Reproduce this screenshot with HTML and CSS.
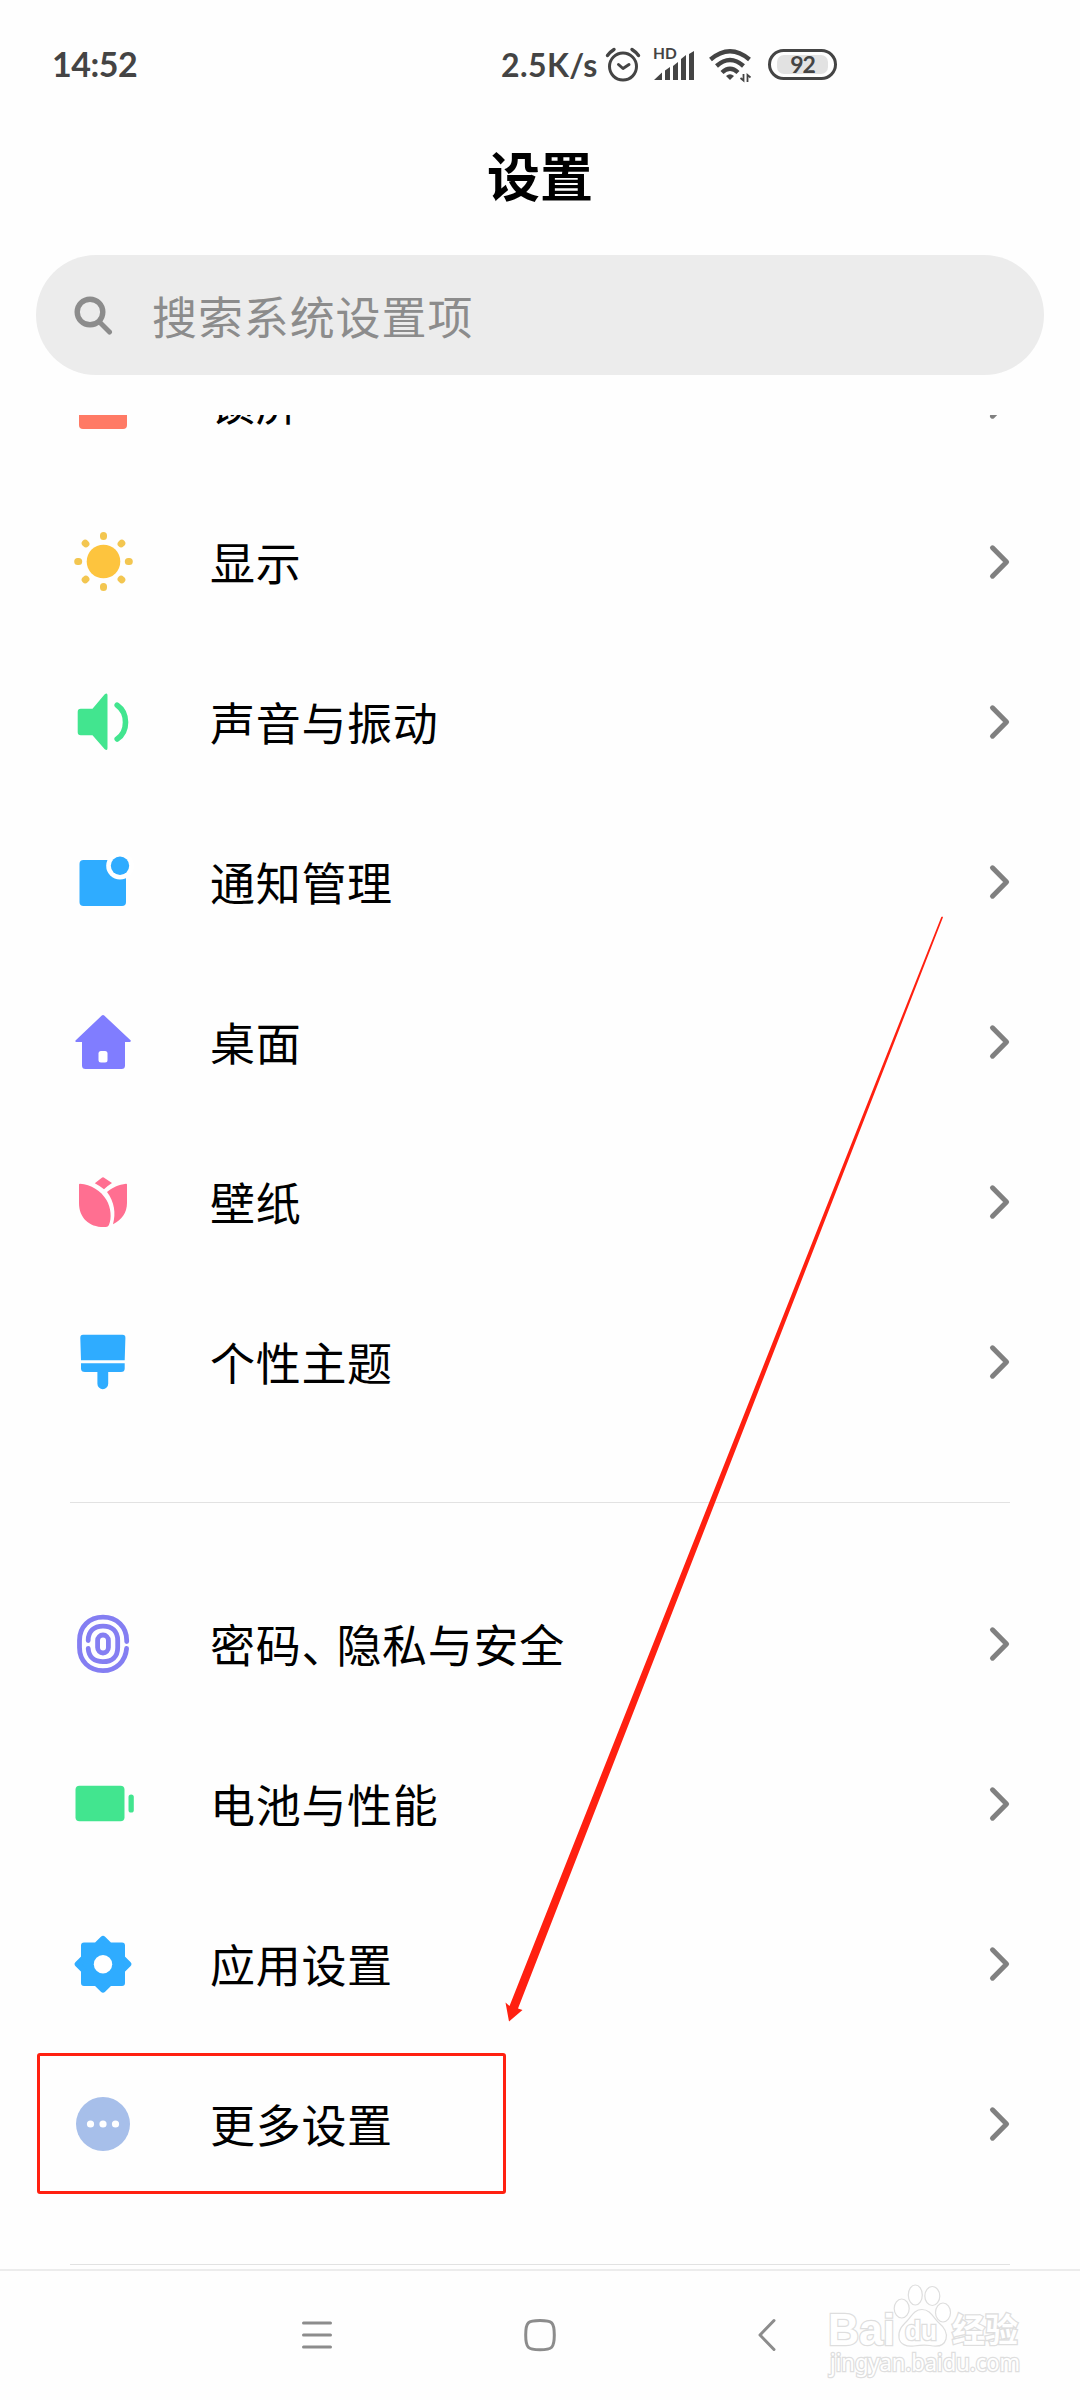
FILE: index.html
```html
<!DOCTYPE html>
<html lang="zh-CN">
<head>
<meta charset="utf-8">
<title>设置</title>
<link rel="stylesheet" href="styles.css">
</head>
<body>
<svg class="defs" width="0" height="0" aria-hidden="true">
  <symbol id="chevron" viewBox="0 0 24 36"><path d="M4.5 3.8 18.6 18 4.5 32.2" fill="none" stroke="#808080" stroke-width="5" stroke-linecap="round" stroke-linejoin="round"/></symbol>
</svg>
<div class="phone">
  <header class="status">
    <span class="clock">14:52</span>
    <div class="indicators">
      <span class="speed">2.5K/s</span>
      <svg class="alarm" width="36" height="36" viewBox="0 0 36 36" fill="none" stroke="#444" stroke-linecap="round">
        <circle cx="18" cy="19.6" r="13.5" stroke-width="3"/>
        <path d="M13.5 17.5 18 21.5 24 17.5" stroke-width="3" stroke-linejoin="round"/>
        <path d="M2.5 8.5Q5 5 9 2.5M33.5 8.5Q31 5 27 2.5" stroke-width="3.4"/>
      </svg>
      <div class="mobile">
        <span class="hd">HD</span>
        <svg width="42" height="32" viewBox="0 0 42 32" fill="#444">
          <path d="M1 31 9 23.5V31ZM12 21.5 17 18V31H12ZM20 17 25 13V31H20ZM28 10 33 6V31H28ZM36 5 41 2V31H36Z"/>
        </svg>
      </div>
      <svg class="wifi" width="44" height="36" viewBox="0 0 44 36">
        <g fill="none" stroke="#444" stroke-width="4.4">
          <path d="M1.5 12.5Q21 -4 40.5 12.5"/>
          <path d="M7.5 19Q21 7 34.5 19"/>
          <path d="M13 25.5Q21 18 29 25.5"/>
        </g>
        <path d="M17 29Q21 25.5 25 29L21 33Z" fill="#444"/>
        <path d="M34.5 27V33.5L31.5 31M38.5 35V28L41.5 30.5" fill="none" stroke="#444" stroke-width="1.8"/>
      </svg>
      <div class="battery"><span class="level">92</span></div>
    </div>
  </header>

  <h1 class="title">设置</h1>

  <div class="search">
    <svg width="40" height="40" viewBox="0 0 40 40" fill="none" stroke="#8c8c8c" stroke-linecap="round">
      <circle cx="16" cy="17" r="12.8" stroke-width="5.4"/>
      <path d="M26 27.5 35.5 37" stroke-width="5"/>
    </svg>
    <span class="hint">搜索系统设置项</span>
  </div>

  <main class="list">
    <div class="group">
      <div class="row">
        <svg class="icon" viewBox="0 0 64 64"><rect x="8" y="20" width="48" height="39" rx="4" fill="#ff7a65"/><path d="M18 22V16a14 12 0 0 1 28 0V22" fill="none" stroke="#ff7a65" stroke-width="5"/></svg>
        <span class="label">锁屏</span><svg class="chev"><use href="#chevron"/></svg>
      </div>
      <div class="row">
        <svg class="icon" viewBox="0 0 64 64">
          <circle cx="32.5" cy="31.5" r="16.8" fill="#fdc43e"/>
          <g stroke="#f3c650" stroke-width="7" stroke-linecap="round"><path d="M32.5 5.5V6.5M32.5 56.5V57.5M6.7 31.5H7.7M57.3 31.5H58.3M14.2 13.2 14.9 13.9M50.8 13.2 50.1 13.9M14.2 49.8 14.9 49.1M50.8 49.8 50.1 49.1"/></g>
        </svg>
        <span class="label">显示</span><svg class="chev"><use href="#chevron"/></svg>
      </div>
      <div class="row">
        <svg class="icon" viewBox="0 0 64 64">
          <path d="M9.7 18.7H21.5L33.5 4.5Q36.5 2.2 36.5 5.5V58Q36.5 61.3 33.5 59L21.5 45.3H9.7Q6.7 45.3 6.7 42.3V21.7Q6.7 18.7 9.7 18.7Z" fill="#42e58f"/>
          <path d="M46.2 15.2C57.3 23 57.3 41.5 46.2 49" fill="none" stroke="#42e58f" stroke-width="5.6" stroke-linecap="round"/>
        </svg>
        <span class="label">声音与振动</span><svg class="chev"><use href="#chevron"/></svg>
      </div>
      <div class="row">
        <svg class="icon" viewBox="0 0 64 64">
          <rect x="8.5" y="10" width="46.5" height="46" rx="4" fill="#2facff"/>
          <circle cx="49" cy="15.7" r="13.8" fill="#fff"/><circle cx="49" cy="15.7" r="9.2" fill="#2facff"/>
        </svg>
        <span class="label">通知管理</span><svg class="chev"><use href="#chevron"/></svg>
      </div>
      <div class="row">
        <svg class="icon" viewBox="0 0 64 64">
          <path d="M30.5 5.8Q32 4.4 33.5 5.8L59.8 30.5Q60 32 58.5 32H54V55.5Q54 59 50.5 59H14.5Q11 59 11 55.5V32H5.5Q3.8 32 4.5 30.5Z" fill="#807dff"/>
          <rect x="27.5" y="41" width="9" height="11.5" rx="2.5" fill="#fff"/>
        </svg>
        <span class="label">桌面</span><svg class="chev"><use href="#chevron"/></svg>
      </div>
      <div class="row">
        <svg class="icon" viewBox="0 0 64 64" fill="#ff6f91">
          <path d="M8 14.5Q8 13.7 9 13.7C20 14.5 30 20.5 35.5 30C40 38 41 48 37.8 55.3Q37 57 35 57C19 58 8 48.5 8 33Z"/>
          <path d="M56 14.5Q56 13.6 55 13.7C48 14.5 41 17.5 36 22C43.5 32 45 43 42 54.3C50.5 50 56 43 56 33Z"/>
          <path d="M30.5 8Q32 6.5 33.5 8L41 13Q37 15.5 33 19.3Q29 16 23.8 13.3Z"/>
        </svg>
        <span class="label">壁纸</span><svg class="chev"><use href="#chevron"/></svg>
      </div>
      <div class="row">
        <svg class="icon" viewBox="0 0 64 64" fill="#2facff">
          <path d="M12 4.7H51.5Q54.5 4.7 54.4 8L53.7 30.3H10L9.3 8Q9.2 4.7 12 4.7Z"/>
          <path d="M10 33.3H53.7V38.5Q53.7 42 50 42H37.2V53.8A5.4 5.4 0 0 1 26.4 53.8V42H14Q10 42 10 38.5Z"/>
        </svg>
        <span class="label">个性主题</span><svg class="chev"><use href="#chevron"/></svg>
      </div>
    </div>
    <div class="group">
      <div class="row">
        <svg class="icon" viewBox="0 0 64 64" fill="none" stroke="#847ef2" stroke-width="4.8" stroke-linecap="round">
          <path d="M55.7 29.5V28.5C55.7 15 46 5.2 32 5.2S8.5 15 8.5 28.5V35.5C8.5 49 18 58.6 32 58.6C45 58.6 54.5 49.5 55.6 36.5"/>
          <path d="M17.2 28.5C17.2 19 23 14.2 32 14.2S46.7 19 46.7 28.5V35.5C46.7 45 41 49.7 32 49.7C23.5 49.7 17.8 45.5 17.2 36.5"/>
          <rect x="26.6" y="23" width="10.8" height="18" rx="5.4"/>
        </svg>
        <span class="label">密码<span class="comma">、</span>隐私与安全</span><svg class="chev"><use href="#chevron"/></svg>
      </div>
      <div class="row">
        <svg class="icon" viewBox="0 0 64 64" fill="#42e58f">
          <rect x="4.5" y="13.7" width="49" height="35.6" rx="4"/><rect x="57.5" y="22.5" width="5.3" height="18" rx="2.6"/>
        </svg>
        <span class="label">电池与性能</span><svg class="chev"><use href="#chevron"/></svg>
      </div>
      <div class="row">
        <svg class="icon" viewBox="0 0 64 64">
          <g fill="#2facff" stroke="#2facff" stroke-width="6" stroke-linejoin="round"><path d="M32 7 38.6 13.4H51V25.9L57.3 32.2 51 38.5V51H38.6L32 57.5 25.4 51H13V38.5L6.7 32.2 13 25.9V13.4H25.4Z"/></g>
          <circle cx="32" cy="32.2" r="9.2" fill="#fff"/>
        </svg>
        <span class="label">应用设置</span><svg class="chev"><use href="#chevron"/></svg>
      </div>
      <div class="row">
        <svg class="icon" viewBox="0 0 64 64"><circle cx="32" cy="32" r="27" fill="#a7bfea"/><g fill="#fff"><circle cx="19.5" cy="32" r="3.6"/><circle cx="32" cy="32" r="3.6"/><circle cx="44.5" cy="32" r="3.6"/></g></svg>
        <span class="label">更多设置</span><svg class="chev"><use href="#chevron"/></svg>
      </div>
    </div>
  </main>

  <nav class="navbar">
    <svg width="36" height="36" viewBox="0 0 36 36" fill="none" stroke="#8c8c8c" stroke-width="3" stroke-linecap="round"><path d="M4.5 6H31.5M4.5 18H31.5M4.5 30H31.5"/></svg>
    <svg width="36" height="36" viewBox="0 0 36 36" fill="none" stroke="#8c8c8c" stroke-width="3"><path d="M17 3.5C29 3.5 31.3 5 31.3 18S29 32.7 17 32.7 2.7 31 2.7 18 5 3.5 17 3.5Z"/></svg>
    <svg width="36" height="36" viewBox="0 0 36 36" fill="none" stroke="#8c8c8c" stroke-width="3" stroke-linecap="round" stroke-linejoin="round"><path d="M27 3.5 13 18 27 32.5"/></svg>
  </nav>

  <div class="highlight"></div>
  <svg class="arrow" width="450" height="1120" viewBox="500 910 450 1120"><path d="M942.2 916.5 943 917.2 518 2008.5 522.5 2010 509 2021.5 505.5 2002.5 509.5 2006 941.3 917Z" fill="#ff2010"/></svg>

  <svg class="watermark" width="220" height="110" viewBox="820 2275 220 110">
    <g fill="#fff" stroke="#dedede" stroke-width="1.2">
      <ellipse cx="901.7" cy="2308.5" rx="7.5" ry="9.5"/><ellipse cx="915.3" cy="2295" rx="7" ry="10"/>
      <ellipse cx="932.3" cy="2296" rx="7.5" ry="9.5"/><ellipse cx="943" cy="2312.5" rx="7.5" ry="9.5"/>
      <path d="M922 2309.5C930 2309.5 933 2317 938 2322C944 2327 948 2332 946 2339C944 2346 937 2347 930 2345.5C924 2344.5 920 2345 914 2346C906 2347 900 2344 899 2338C898 2330 902 2326 907 2321C912 2316 914 2309.5 922 2309.5Z"/>
      <g paint-order="stroke" stroke-width="2.6">
        <text class="wm-logo" x="828" y="2345" font-size="45" textLength="67" lengthAdjust="spacingAndGlyphs">Bai</text>
        <text class="wm-logo" x="905" y="2340" font-size="27" textLength="32" lengthAdjust="spacingAndGlyphs">du</text>
        <text class="wm-cn" x="952" y="2342" font-size="33">经验</text>
        <text class="wm-url" x="830" y="2371" font-size="23" textLength="190" lengthAdjust="spacingAndGlyphs">jingyan.baidu.com</text>
      </g>
    </g>
  </svg>
</div>
</body>
</html>
```
FILE: styles.css
```css
* { box-sizing: border-box; }

body {
  margin: 0;
  background: #fefefe;
  color: #000;
  font-family: "Noto Sans CJK SC", sans-serif;
}

svg { display: block; flex: none; }
.defs { position: absolute; }

.phone {
  position: relative;
  display: flex;
  flex-direction: column;
  width: 1080px;
  height: 2400px;
  overflow: hidden;
}

/* status bar */
.status {
  display: flex;
  align-items: center;
  flex: none;
  height: 130px;
  padding-left: 52px;
  color: #444;
  font-family: Lato, sans-serif;
  font-weight: 700;
}
.clock { width: 449px; padding-bottom: 2px; font-size: 34px; line-height: 40px; letter-spacing: -0.5px; }
.indicators { display: flex; align-items: center; }
.speed { width: 104px; padding-bottom: 1px; font-size: 32px; line-height: 40px; letter-spacing: 0.4px; }
.alarm { margin-right: 12px; }
.mobile { position: relative; width: 42px; padding-bottom: 4px; margin: 4px 14px 0 0; }
.hd {
  position: absolute;
  left: 0;
  top: -5px;
  font-size: 15.5px;
  line-height: 18px;
}
.wifi { margin-right: 15px; }
.battery {
  display: flex;
  width: 69px;
  height: 31px;
  margin-top: -2px;
  padding: 3px 6px;
  border: 3px solid #444;
  border-radius: 16px;
}
.level {
  flex: 1;
  background: #e2e2e2;
  border-radius: 7px;
  font-size: 23px;
  line-height: 19px;
  letter-spacing: -1px;
  text-align: center;
}

.title {
  flex: none;
  height: 125px;
  margin: 0;
  padding-top: 14px;
  font-size: 53px;
  font-weight: 700;
  line-height: 60px;
  text-align: center;
}

/* search field */
.search {
  display: flex;
  align-items: center;
  flex: none;
  gap: 38px;
  height: 120px;
  margin: 0 36px;
  padding: 0 37px 0 38px;
  border-radius: 60px;
  background: #ececec;
  color: #8c8c8c;
}
.hint { padding-top: 1px; font-size: 45px; line-height: 60px; letter-spacing: 0.9px; }

/* settings list, scrolled part-way under the search field */
.list {
  flex: none;
  height: 1854px;
  margin-top: 40px;
  overflow: hidden;
}
.group { margin: 0 70px; padding-bottom: 60px; border-bottom: 1px solid #e2e2e2; }
.group:first-child { margin-top: -93px; }
.group + .group { padding-top: 61px; }
.row { display: flex; align-items: center; height: 160px; padding-left: 1px; }
.icon { width: 64px; height: 64px; margin-right: 75px; }
.label { flex: 1; font-size: 45px; line-height: 60px; letter-spacing: 0.7px; }
.comma { letter-spacing: -10px; }
.chev { width: 24px; height: 36px; margin-right: -2px; }

/* system navigation */
.navbar {
  display: flex;
  justify-content: space-between;
  flex: none;
  height: 131px;
  padding: 46px 297px 0 299px;
  border-top: 2px solid #ececec;
}

/* annotations */
.highlight {
  position: absolute;
  left: 37px;
  top: 2053px;
  width: 469px;
  height: 141px;
  border: 3px solid #ff2010;
  border-radius: 3px;
}
.arrow { position: absolute; left: 500px; top: 910px; }
.watermark { position: absolute; left: 820px; top: 2275px; }
.wm-logo { font-family: "Liberation Sans", sans-serif; font-weight: 700; }
.wm-cn { font-family: "Noto Sans CJK SC", sans-serif; font-weight: 700; }
.wm-url { font-family: "Noto Sans", sans-serif; }
```
